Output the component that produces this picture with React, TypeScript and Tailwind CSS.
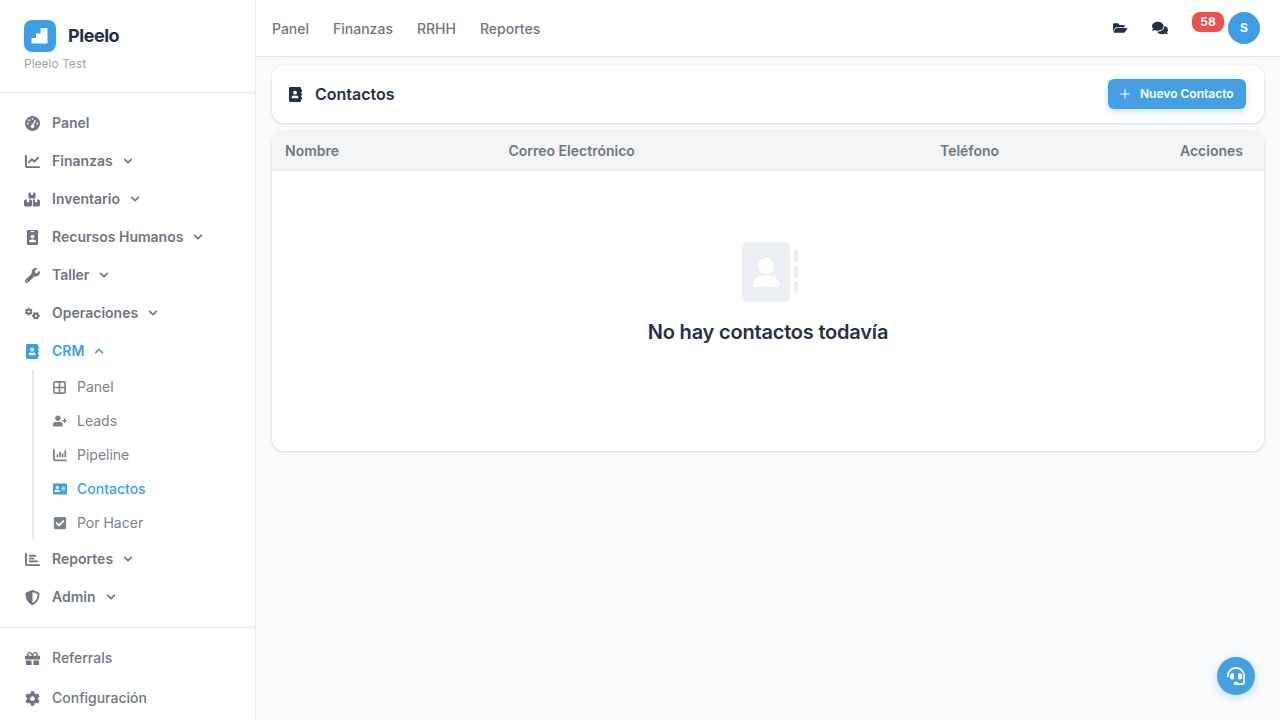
import type { IconType } from 'react-icons';
import {
  FaAddressBook,
  FaAddressCard,
  FaBell,
  FaChevronDown,
  FaChevronUp,
  FaCog,
  FaCheckSquare,
  FaComments,
  FaFolderOpen,
  FaGift,
  FaHeadset,
  FaIdBadge,
  FaShieldAlt,
  FaUserPlus,
  FaWrench,
} from 'react-icons/fa';
import { FaBoxesStacked, FaChartBar, FaChartColumn, FaChartLine, FaGaugeHigh, FaGears } from 'react-icons/fa6';
import { Grid2x2, Plus } from 'lucide-react';

function NavItem({ icon: Icon, label, caret, active }: { icon: IconType; label: string; caret?: 'up' | 'down'; active?: boolean }) {
  return (
    <div className={`flex h-[38px] items-center text-sm font-semibold ${active ? 'text-[#3b9fe8]' : 'text-[#6f7682]'}`}>
      <span className="flex w-4 justify-center text-[15px]">
        <Icon />
      </span>
      <span className="ml-3">{label}</span>
      {caret === 'down' && <FaChevronDown className="ml-[10px] text-[10px]" />}
      {caret === 'up' && <FaChevronUp className="ml-[10px] text-[10px]" />}
    </div>
  );
}

function SubItem({ icon: Icon, label, active }: { icon: IconType; label: string; active?: boolean }) {
  return (
    <div className={`flex h-[34px] items-center text-sm ${active ? 'font-medium text-[#3b9fe8]' : 'text-[#7b818d]'}`}>
      <span className="flex w-[15px] justify-center text-sm">
        <Icon />
      </span>
      <span className="ml-[10px]">{label}</span>
    </div>
  );
}

function PanelGrid() {
  return <Grid2x2 size={15} strokeWidth={2.6} />;
}

function BoxesIcon() {
  return <FaBoxesStacked className="text-[17px]" />;
}

function Sidebar() {
  return (
    <aside className="flex h-screen w-[256px] shrink-0 flex-col border-r border-[#e5e7eb] bg-white">
      <div className="h-[93px] border-b border-[#e5e7eb] px-6 pt-5">
        <div className="flex items-center gap-3">
          <div className="flex h-8 w-8 items-center justify-center rounded-lg bg-[#3b9fe8]">
            <svg width="18" height="16" viewBox="0 0 18 16" fill="white">
              <path d="M9.5 0H16.5V15.5H0.5V10H5V5.500H9.500Z" />
            </svg>
          </div>
          <span className="text-lg font-bold tracking-tight text-[#253144]">Pleelo</span>
        </div>
        <div className="mt-[4px] text-xs text-[#9ca3af]">Pleelo Test</div>
      </div>

      <nav className="flex-1 px-6 pt-[11px]">
        <NavItem icon={FaGaugeHigh} label="Panel" />
        <NavItem icon={FaChartLine} label="Finanzas" caret="down" />
        <NavItem icon={BoxesIcon as IconType} label="Inventario" caret="down" />
        <NavItem icon={FaIdBadge} label="Recursos Humanos" caret="down" />
        <NavItem icon={FaWrench} label="Taller" caret="down" />
        <NavItem icon={FaGears} label="Operaciones" caret="down" />
        <NavItem icon={FaAddressBook} label="CRM" caret="up" active />
        <div className="ml-2 border-l-2 border-[#e9ebef] pl-[18px]">
          <SubItem icon={PanelGrid as IconType} label="Panel" />
          <SubItem icon={FaUserPlus} label="Leads" />
          <SubItem icon={FaChartColumn} label="Pipeline" />
          <SubItem icon={FaAddressCard} label="Contactos" active />
          <SubItem icon={FaCheckSquare} label="Por Hacer" />
        </div>
        <NavItem icon={FaChartBar} label="Reportes" caret="down" />
        <NavItem icon={FaShieldAlt} label="Admin" caret="down" />
      </nav>

      <div className="h-[93px] border-t border-[#e5e7eb] px-6 pt-[10px]">
        <div className="flex h-10 items-center text-sm font-medium text-[#6f7682]">
          <span className="flex w-4 justify-center text-[15px]">
            <FaGift />
          </span>
          <span className="ml-3">Referrals</span>
        </div>
        <div className="flex h-10 items-center text-sm font-medium text-[#6f7682]">
          <span className="flex w-4 justify-center text-[15px]">
            <FaCog />
          </span>
          <span className="ml-3">Configuración</span>
        </div>
      </div>
    </aside>
  );
}

function Topbar() {
  return (
    <header className="flex h-[57px] shrink-0 items-center justify-between border-b border-[#e5e7eb] bg-white pl-4 pr-5">
      <nav className="mt-[2px] flex gap-6 text-sm font-medium text-[#6f7682]">
        <span>Panel</span>
        <span>Finanzas</span>
        <span>RRHH</span>
        <span>Reportes</span>
      </nav>
      <div className="flex items-center text-[#253144]">
        <FaFolderOpen className="text-sm" />
        <FaComments className="ml-[25px] text-base" />
        <div className="relative ml-[25px] mr-[3px] h-4 w-[12px]">
          <FaBell className="-mt-[1px] text-xs" />
          <span className="absolute -top-[8px] -left-[1px] flex h-5 w-8 items-center justify-center rounded-lg bg-[#ef5050] text-xs font-bold text-white">
            58
          </span>
        </div>
        <div className="ml-[20px] flex h-8 w-8 items-center justify-center rounded-full bg-[#3b9fe8] text-xs font-bold text-white">
          S
        </div>
      </div>
    </header>
  );
}

export default function App() {
  return (
    <div className="flex h-screen overflow-hidden bg-[#f9fbfd] font-['Inter',sans-serif] antialiased">
      <Sidebar />
      <div className="flex min-w-0 flex-1 flex-col">
        <Topbar />
        <main className="flex flex-col gap-2 px-4 pt-2">
          {/* Page title */}
          <div className="flex h-[58px] items-center justify-between rounded-xl bg-white pl-4 pr-[18px] shadow-[0_1px_3px_rgba(0,0,0,0.16)]">
            <div className="flex items-center gap-3">
              <FaAddressBook className="text-[15px] text-[#253144]" />
              <h1 className="text-base font-semibold text-[#253144]">Contactos</h1>
            </div>
            <button className="flex h-[30px] w-[138px] items-center gap-2 rounded-md bg-[#459fe3] pl-[10px] text-xs font-semibold text-white shadow-[0_2px_6px_rgba(59,159,232,0.35)]">
              <Plus size={14} strokeWidth={2} />
              Nuevo Contacto
            </button>
          </div>

          {/* Contacts table */}
          <div className="h-[320px] overflow-hidden rounded-xl border-t border-[#eceef1] bg-white shadow-[0_1px_3px_rgba(0,0,0,0.16)]">
            <div className="grid h-[38px] grid-cols-[223.500px_431.500px_1fr_auto] items-center border-b border-[#e5e7eb] bg-[#f4f5f7] pl-[13px] pr-[21px] text-sm font-semibold text-[#6f7682]">
              <span>Nombre</span>
              <span>Correo Electrónico</span>
              <span>Teléfono</span>
              <span>Acciones</span>
            </div>
            <div className="flex flex-col items-center pt-[72px]">
              <svg className="ml-1" width="56" height="60" viewBox="0 0 56 60" fill="#ebeef2">
                <path d="M6 0H42a6 6 0 0 1 6 6V54a6 6 0 0 1-6 6H6a6 6 0 0 1-6-6V6a6 6 0 0 1 6-6Z" />
                <rect x="52" y="8" width="4" height="12" rx="1.500" />
                <rect x="52" y="24" width="4" height="12" rx="1.500" />
                <rect x="52" y="39" width="4" height="12" rx="1.500" />
                <circle cx="24" cy="24" r="8" fill="white" />
                <path d="M11 43c0-6 5-9.500 9-9.500h8c4 0 9 3.500 9 9.500 0 1-1 2-2 2H13c-1 0-2-1-2-2Z" fill="white" />
              </svg>
              <p className="mt-[16px] text-xl font-semibold tracking-[-0.2px] text-[#253144]">No hay contactos todavía</p>
            </div>
          </div>
        </main>
      </div>

      {/* Support button */}
      <button className="fixed bottom-[25px] right-[25px] flex h-[38px] w-[38px] items-center justify-center rounded-full bg-[#459fe3] text-lg text-white shadow-[0_2px_8px_rgba(59,159,232,0.35)]">
        <FaHeadset />
      </button>
    </div>
  );
}
